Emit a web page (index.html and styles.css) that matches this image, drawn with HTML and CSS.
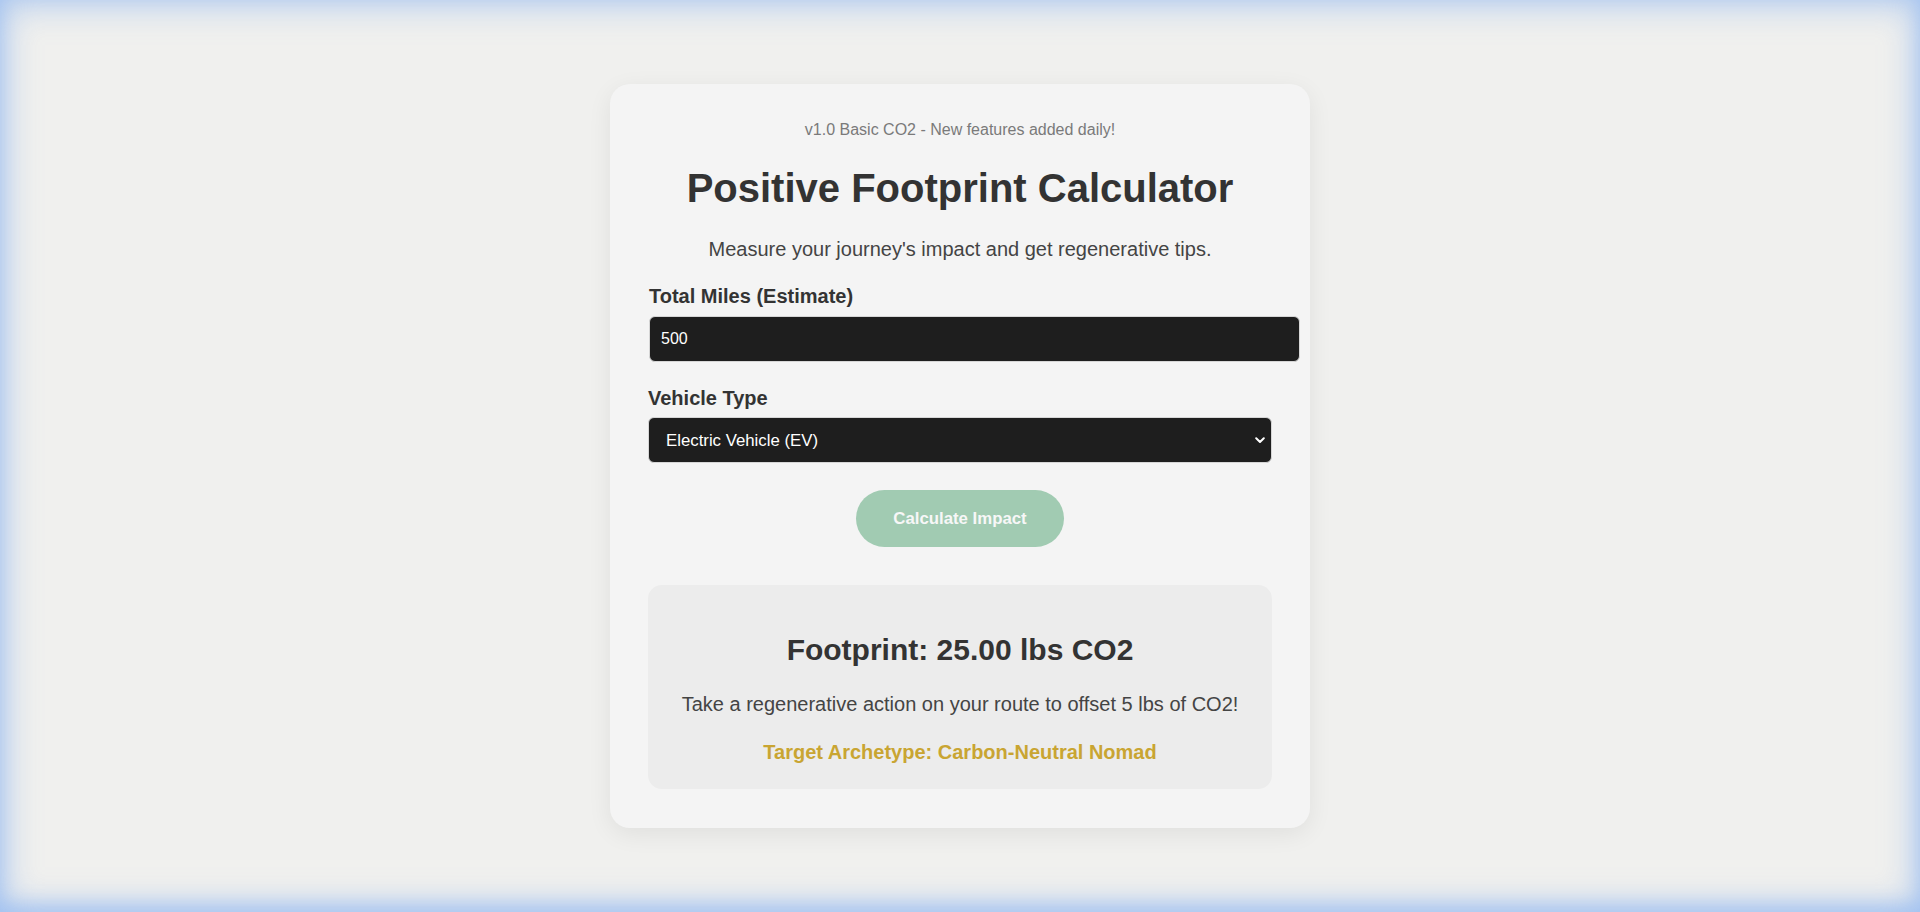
FILE: index.html
```html
<!DOCTYPE html>
<html lang="en">
<head>
<meta charset="utf-8">
<title>Positive Footprint Calculator</title>
<link rel="stylesheet" href="styles.css">
</head>
<body>
<main class="card">
  <p class="version">v1.0 Basic CO2 - New features added daily!</p>
  <h1 class="title">Positive Footprint Calculator</h1>
  <p class="subtitle">Measure your journey's impact and get regenerative tips.</p>
  <label class="label" for="miles">Total Miles (Estimate)</label>
  <input class="miles" id="miles" type="text" value="500">
  <label class="label label-vehicle" for="vehicle">Vehicle Type</label>
  <div class="select-wrap">
    <select class="vehicle" id="vehicle">
      <option>Electric Vehicle (EV)</option>
      <option>Gasoline Car</option>
      <option>Hybrid</option>
    </select>
    <svg class="chevron" width="10" height="7" viewBox="0 0 10 7"><path d="M1.2 1.3 L5 5 L8.8 1.3" fill="none" stroke="#fff" stroke-width="2" stroke-linecap="round" stroke-linejoin="round"/></svg>
  </div>
  <div class="actions">
    <button class="calc" type="button">Calculate Impact</button>
  </div>
  <section class="result">
    <h2 class="footprint">Footprint: 25.00 lbs CO2</h2>
    <p class="tip">Take a regenerative action on your route to offset 5 lbs of CO2!</p>
    <p class="archetype">Target Archetype: Carbon-Neutral Nomad</p>
  </section>
</main>
</body>
</html>
```
FILE: styles.css
```css
html, body {
  margin: 0;
  padding: 0;
}
body {
  min-height: 100vh;
  background: #f0f0ee;
  font-family: "Liberation Sans", Arial, sans-serif;
  color: #333;
  display: flex;
  align-items: center;
  justify-content: center;
  box-shadow:
    inset 0 0 34px 4px rgba(130, 175, 240, 0.6),
    inset 0 -8px 18px rgba(120, 170, 245, 0.35);
}
.card {
  width: 700px;
  box-sizing: border-box;
  background: #f4f4f4;
  border-radius: 20px;
  padding: 36px 38px 39px 38px;
  box-shadow: 0 6px 24px rgba(0, 0, 0, 0.07);
  display: flex;
  flex-direction: column;
}
.version {
  margin: 0;
  font-size: 16px;
  line-height: 20px;
  color: #7a7a7a;
  text-align: center;
}
.title {
  margin: 24px 0 0;
  font-size: 40px;
  line-height: 48px;
  font-weight: bold;
  color: #333;
  text-align: center;
}
.subtitle {
  margin: 25px 0 0;
  font-size: 20px;
  line-height: 24px;
  color: #444;
  text-align: center;
}
.label {
  margin-top: 23px;
  padding-left: 1px;
  font-size: 20px;
  line-height: 24px;
  font-weight: bold;
  color: #333;
}
.label-vehicle {
  margin-top: 24px;
  padding-left: 0;
}
.miles {
  margin-top: 8px;
  margin-left: 1px;
  height: 46px;
  box-sizing: border-box;
  width: calc(100% + 27px);
  padding: 0 16px 0 11px;
  border: 1px solid #d6d6d6;
  border-radius: 6px;
  background: #1e1e1e;
  color: #fff;
  font-family: "Liberation Sans", Arial, sans-serif;
  font-size: 16px;
  outline: none;
}
.select-wrap {
  margin-top: 7px;
  position: relative;
}
.vehicle {
  width: 100%;
  height: 46px;
  box-sizing: border-box;
  padding: 0 30px 0 17px;
  border: 1px solid #d6d6d6;
  border-radius: 6px;
  background: #1e1e1e;
  color: #fff;
  font-family: "Liberation Sans", Arial, sans-serif;
  font-size: 16.8px;
  appearance: none;
  -webkit-appearance: none;
  outline: none;
  display: block;
}
.chevron {
  position: absolute;
  right: 7px;
  top: 20px;
  pointer-events: none;
}
.actions {
  margin-top: 27px;
  display: flex;
  justify-content: center;
}
.calc {
  width: 208px;
  height: 57px;
  border: none;
  border-radius: 29px;
  background: #a1cbb2;
  color: #f7f7f7;
  font-family: "Liberation Sans", Arial, sans-serif;
  font-size: 16.8px;
  font-weight: bold;
  padding: 0;
}
.result {
  margin-top: 38px;
  background: #ececec;
  border-radius: 14px;
  padding: 47px 20px 25px;
  text-align: center;
}
.footprint {
  margin: 0;
  font-size: 30px;
  line-height: 36px;
  font-weight: bold;
  color: #333;
}
.tip {
  margin: 24px 0 0;
  font-size: 20px;
  line-height: 24px;
  color: #444;
}
.archetype {
  margin: 24px 0 0;
  font-size: 20px;
  line-height: 24px;
  font-weight: bold;
  color: #c9a532;
}
```
